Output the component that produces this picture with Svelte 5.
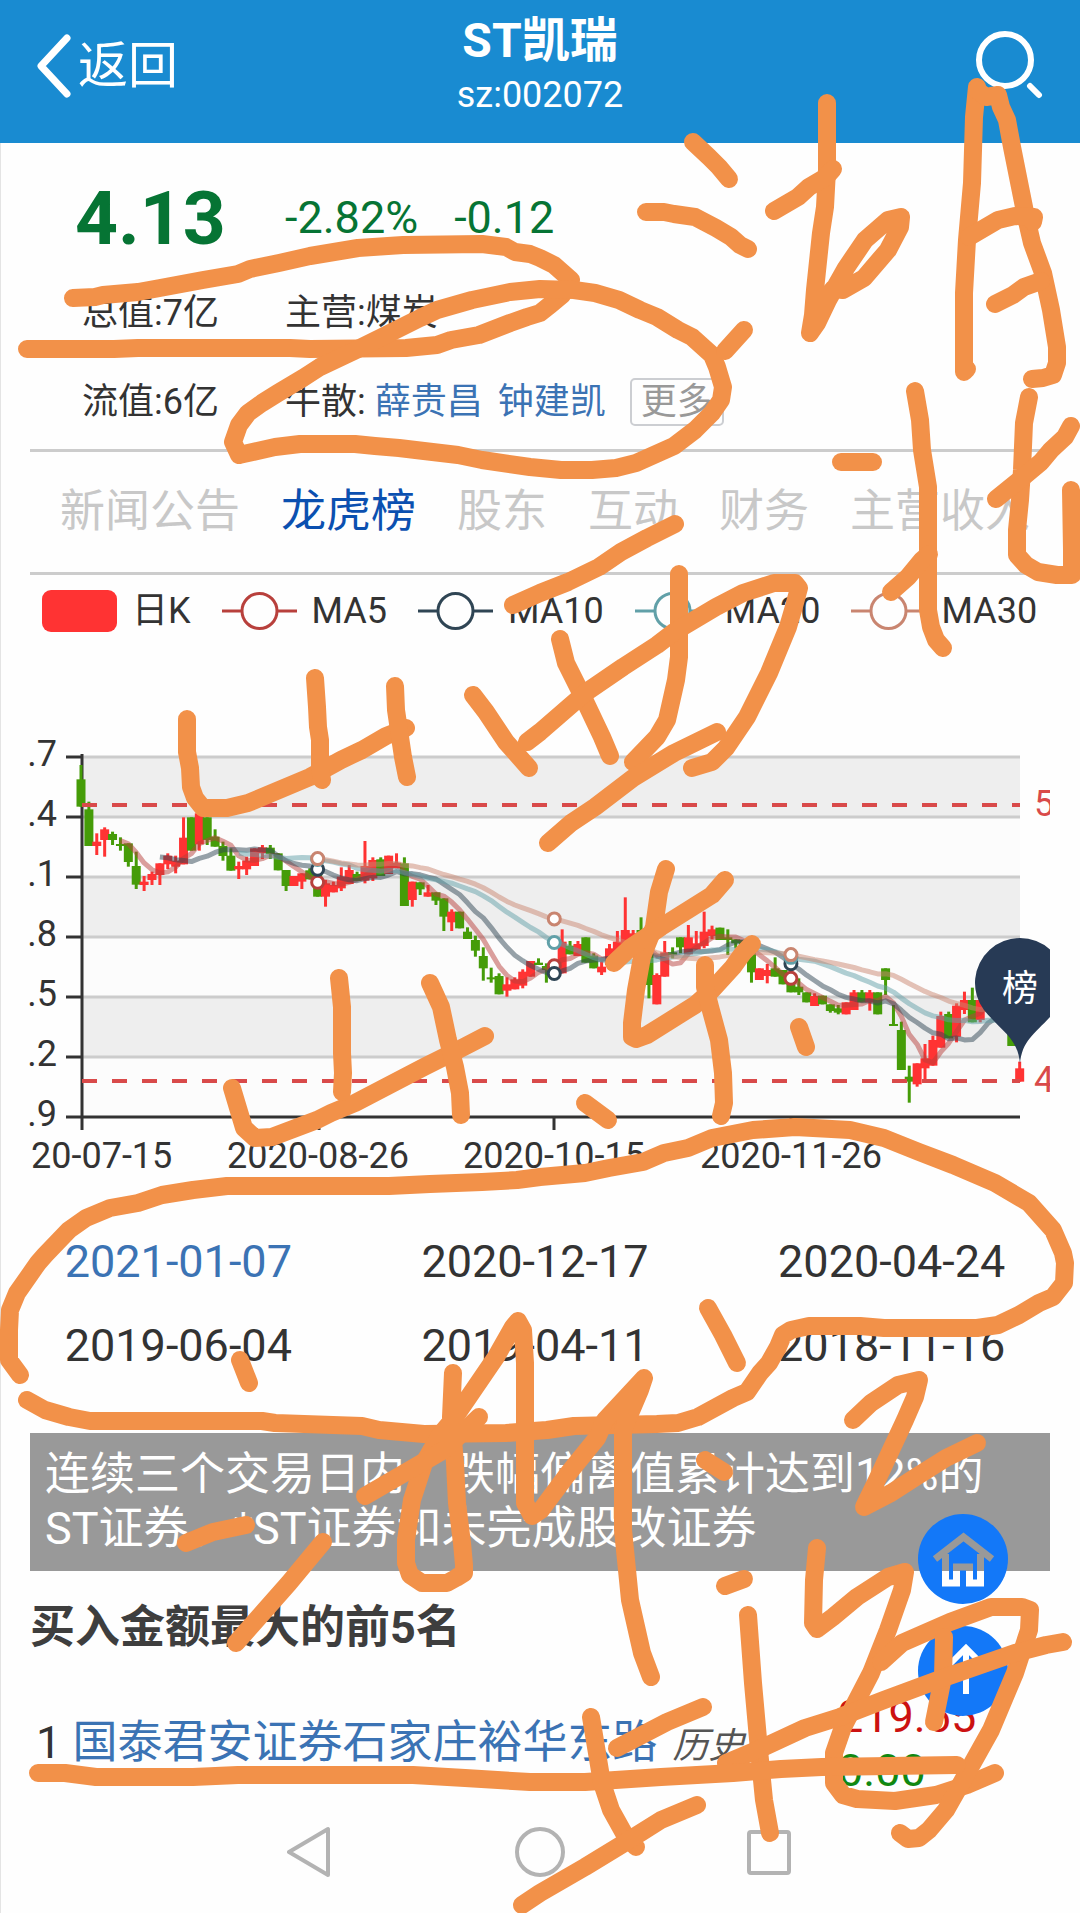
<script>
  const tabs = ['新闻公告', '龙虎榜', '股东', '互动', '财务', '主营收入'];
  let activeTab = $state('龙虎榜');

  const dates = [
    '2021-01-07', '2020-12-17', '2020-04-24',
    '2019-06-04', '2019-04-11', '2018-11-16'
  ];
  let activeDate = $state('2021-01-07');

  const buyers = [
    { rank: 1, name: '国泰君安证券石家庄裕华东路', buy: '219.65', sell: '0.00' }
  ];

  const SERIES = [
    { label: 'MA5', days: 5, color: '#b8403c' },
    { label: 'MA10', days: 10, color: '#2f4554' },
    { label: 'MA20', days: 20, color: '#61a0a8' },
    { label: 'MA30', days: 30, color: '#c98570' }
  ];

  const UP = '#ff3333';
  const DOWN = '#459c08';

  // [high, body top, body bottom, low, 1 = up], three units per pixel, counted downwards
  const CANDLES = [
    [75, 118, 200, 200, 0], [185, 208, 318, 318, 0], [280, 305, 318, 345, 1], [262, 268, 300, 350, 1],
    [275, 282, 300, 315, 0], [292, 312, 318, 332, 0], [310, 310, 366, 380, 0], [335, 378, 434, 447, 0],
    [408, 425, 435, 453, 1], [395, 402, 420, 435, 1], [370, 370, 405, 435, 1], [340, 347, 373, 387, 1],
    [347, 362, 380, 400, 1], [232, 293, 373, 373, 1], [232, 232, 332, 332, 0], [215, 220, 313, 332, 1],
    [232, 232, 300, 315, 0], [268, 290, 320, 320, 0], [305, 318, 348, 362, 0], [325, 347, 392, 392, 0],
    [365, 378, 388, 417, 1], [350, 362, 388, 405, 1], [325, 325, 378, 378, 1], [315, 322, 340, 357, 1],
    [315, 323, 342, 357, 0], [340, 340, 391, 391, 0], [390, 390, 438, 453, 0], [408, 408, 438, 438, 1],
    [400, 400, 425, 447, 1], [385, 391, 418, 418, 0], [395, 395, 470, 470, 0], [420, 430, 470, 500, 1],
    [425, 435, 457, 457, 1], [382, 410, 445, 453, 1], [375, 390, 432, 432, 1], [395, 402, 423, 423, 0],
    [303, 378, 422, 430, 1], [352, 360, 415, 423, 1], [352, 358, 408, 408, 0], [347, 347, 402, 402, 1],
    [340, 368, 385, 385, 1], [352, 370, 498, 498, 0], [425, 425, 480, 500, 1], [427, 427, 448, 465, 0],
    [435, 457, 470, 470, 1], [457, 457, 482, 495, 0], [475, 475, 530, 573, 0], [508, 515, 547, 573, 1],
    [515, 515, 565, 565, 0], [562, 575, 597, 597, 0], [587, 600, 632, 650, 0], [622, 648, 685, 722, 0],
    [683, 712, 718, 728, 0], [700, 708, 763, 763, 0], [712, 733, 752, 770, 1], [712, 718, 748, 748, 1],
    [688, 695, 737, 745, 1], [663, 663, 710, 710, 1], [655, 668, 675, 675, 0], [670, 678, 690, 728, 0],
    [660, 664, 690, 690, 1], [568, 605, 700, 700, 1], [603, 617, 643, 643, 0], [603, 612, 648, 648, 1],
    [592, 592, 668, 668, 0], [640, 647, 685, 685, 0], [665, 680, 697, 705, 1], [612, 625, 675, 690, 1],
    [573, 605, 640, 640, 1], [472, 570, 640, 640, 1], [570, 580, 620, 620, 1], [532, 570, 640, 640, 0],
    [590, 640, 735, 775, 0], [700, 705, 793, 793, 1], [603, 637, 710, 710, 1], [622, 637, 645, 655, 0],
    [592, 592, 622, 640, 0], [555, 592, 643, 643, 1], [573, 610, 628, 628, 1], [515, 575, 618, 625, 1],
    [557, 568, 588, 598, 1], [563, 563, 600, 600, 0], [568, 592, 600, 645, 0], [598, 598, 610, 625, 0],
    [600, 600, 630, 630, 0], [640, 640, 697, 728, 0], [685, 685, 720, 720, 1], [672, 690, 708, 730, 1],
    [652, 685, 710, 710, 0], [690, 690, 733, 733, 0], [705, 705, 757, 757, 0], [715, 740, 757, 765, 0],
    [757, 757, 787, 787, 0], [760, 768, 798, 798, 1], [767, 767, 793, 793, 0], [793, 793, 813, 818, 0],
    [795, 805, 818, 823, 0], [787, 787, 823, 823, 1], [750, 757, 810, 810, 1], [750, 757, 787, 787, 0],
    [750, 757, 787, 812, 1], [757, 757, 823, 823, 0], [685, 685, 720, 765, 0], [795, 852, 858, 858, 0],
    [845, 870, 990, 990, 0], [977, 1010, 1025, 1088, 0], [970, 970, 1033, 1040, 1], [912, 955, 985, 1025, 1],
    [887, 900, 977, 977, 1], [815, 828, 923, 923, 1], [815, 822, 895, 895, 0], [790, 797, 890, 907, 1],
    [755, 780, 810, 822, 1], [743, 780, 847, 847, 0], [770, 780, 840, 847, 1], [740, 745, 815, 815, 1],
    [760, 770, 810, 810, 0], [780, 790, 830, 830, 0], [840, 850, 918, 918, 0], [965, 985, 1025, 1025, 1]
  ];

  const Y_TICKS = ['.7', '.4', '.1', '.8', '.5', '.2', '.9'];
  const BANDS = [757, 877, 997];

  const cx = (i) => 81 + i * 7.888;
  const cy = (v) => 740 + v / 3;

  const closes = CANDLES.map((c) => (c[4] ? c[1] : c[2]));

  function average(i, days) {
    let sum = 0;
    for (let j = 0; j < days; j++) sum += closes[i - j];
    return sum / days;
  }

  const averages = SERIES.map((s) => {
    const points = [];
    for (let i = s.days; i < closes.length; i++) {
      points.push(`${cx(i).toFixed(1)},${cy(average(i, s.days)).toFixed(1)}`);
    }
    const marks = [30, 60, 90].map((i) => ({ x: cx(i), y: cy(average(i, s.days)) }));
    return { ...s, points: points.join(' '), marks };
  });

  // Freehand marker strokes lying over the page
  const STROKES = [
    '73,298 95,297 103,295 138,292 160,288 203,280 238,274 250,269 279,263 310,256 358,248 403,245 482,244 506,247 515,252 530,254 540,258 554,265 571,280 562,295 550,305 540,313 527,317 510,323 479,335 451,340 437,345 406,348 310,349 290,348 138,348 114,349 27,349',
    '239,455 233,442 239,425 248,413 262,403 278,393 303,378 320,367 358,349 382,337 420,318 437,310 472,300 510,292 540,289 574,290 595,293 619,300 640,310 657,317 678,330 692,337 712,355 717,367 723,387 721,400 712,413 695,430 674,446 636,463 616,468 592,470 561,470 530,467 482,460 458,455 424,451 399,448 375,446 355,444 300,444 275,447 239,455',
    '744,330 725,351',
    '693,142 709,157 719,167 729,179',
    '646,212 664,212 674,214 695,217 716,228 731,237 740,245 748,249',
    '827,103 827,170 825,207 821,233 815,290 813,315 810,333 817,323 828,300 846,268 865,240 888,220 901,217 900,227 888,250 864,278 843,290 833,289',
    '774,211 798,197 809,187 826,177 833,169',
    '977,87 974,117 972,183 967,240 964,293 964,372 967,369',
    '977,90 986,97 998,95 1001,107 1007,120 1012,147 1020,187 1026,217 1032,243 1043,273 1051,310 1057,347 1057,363 1053,375 1043,378 1032,379',
    '969,237 998,220 1015,216 1034,217 1033,222',
    '995,304 1013,295 1024,287 1041,281',
    '841,462 873,462',
    '915,391 920,420 922,450 928,487 928,610 931,627 936,640 943,648',
    '891,592 908,577 922,560 929,554',
    '1029,397 1024,423 1022,470 1020,500 1017,530 1017,555 1026,565 1038,572 1057,575 1072,575 1072,550 1071,490',
    '996,499 1022,478 1041,462 1051,450 1065,437 1071,426',
    '187,719 187,752 190,768 191,787 195,798 203,808 227,808 248,803 310,777 341,760 362,750 386,736 406,728',
    '315,678 317,707 318,727 320,740 320,768 322,780',
    '395,686 396,710 400,737 403,757 407,777',
    '473,695 486,712 506,742 529,768',
    '513,605 540,593 568,582 599,567 621,552 647,538 675,524',
    '560,639 566,663 583,697 602,737 610,756',
    '679,574 679,657 676,680 667,720 657,737 633,762',
    '527,742 540,732 585,693 623,667 657,645 674,632 716,607 743,593 774,583 795,583 799,588 793,610 788,627 769,673 747,717 726,748 712,762 692,768',
    '548,843 571,823 595,807 633,778 674,753 717,732',
    '232,1088 238,1108 244,1128 255,1138 272,1137 317,1120 331,1113 355,1103 424,1067 458,1050 485,1036',
    '339,978 342,1007 342,1053 343,1073 342,1092',
    '430,983 441,1007 448,1040 455,1067 460,1093 461,1115',
    '666,869 659,892 654,927 642,957 636,990 632,1023 632,1037 636,1039 647,1035 695,1005 712,990 733,967 743,953 752,944',
    '614,963 630,948 661,927 712,895 725,880',
    '705,965 705,987 710,1007 719,1040 723,1073 724,1103 721,1116',
    '799,1027 806,1047',
    '585,1103 608,1120',
    '20,1375 9,1360 9,1330 10,1310 17,1293 38,1263 45,1255 69,1230 86,1218 110,1208 138,1203 162,1195 193,1190 227,1186 389,1186 430,1184 482,1182 517,1180 540,1177 585,1173 609,1168 643,1162 664,1153 688,1148 712,1138 753,1130 795,1127 850,1130 884,1138 919,1152 953,1165 995,1183 1029,1203 1053,1230 1063,1253 1065,1263 1064,1283 1053,1297 1039,1303 1019,1315 998,1325 977,1328 884,1328 860,1326 809,1326 791,1330 783,1335 778,1347 769,1363 760,1373 747,1392 733,1398 698,1417 678,1423 657,1424 574,1426 547,1430 506,1433 424,1434 379,1430 362,1426 275,1423 262,1421 90,1421 69,1417 45,1410 27,1400',
    '240,1360 249,1383',
    '453,1373 451,1417 453,1440 455,1463 457,1503 462,1543 464,1565 464,1573 456,1578 447,1583 422,1583 410,1575 406,1563 406,1540 412,1500 424,1463 440,1435 455,1417 496,1357 513,1327 518,1321 523,1330 525,1363 525,1463 525,1503 532,1516 541,1510 567,1475 597,1438 605,1420 644,1378 640,1390 623,1430 623,1530 630,1600 642,1653 651,1677',
    '365,1496 444,1450 479,1417',
    '186,1543 213,1532 246,1525',
    '323,1542 289,1583 236,1643',
    '708,1308 723,1335 737,1363',
    '705,1460 724,1472',
    '853,1420 871,1403 898,1385 919,1380 915,1397 905,1420 877,1480 864,1507 891,1493 919,1475 946,1458 977,1443',
    '725,1586 744,1579',
    '748,1615 753,1683 759,1750 764,1800 770,1833',
    '817,1548 814,1580 813,1623 817,1629 833,1617 857,1597 888,1577 905,1572 902,1590 888,1630 871,1673 843,1727 834,1753 834,1783 843,1795 857,1799 895,1801 936,1795 967,1785 995,1773',
    '881,1662 902,1643 950,1622 991,1607 1022,1607 1030,1610 1029,1630 1015,1673 991,1730 967,1773 946,1810 929,1830 919,1838 908,1839 900,1833',
    '944,1637 943,1677 934,1722',
    '726,1763 764,1747 805,1728 840,1717 884,1700 946,1677 1015,1653 1046,1645 1063,1642',
    '38,1773 65,1773 96,1777 193,1777 238,1775 413,1775 465,1778 530,1782 585,1782 661,1777 733,1773 781,1769 822,1767 957,1765',
    '591,1717 597,1753 602,1783 611,1810 626,1837 636,1847',
    '617,1748 667,1722 703,1707',
    '522,1905 540,1893 585,1867 626,1842 661,1820 697,1805'
  ];
</script>

<div class="page">
  <header class="topbar">
    <button class="back">
      <svg width="36" height="66" viewBox="0 0 36 66" aria-hidden="true">
        <path d="M31 5 5 33 31 61" fill="none" stroke="currentColor" stroke-width="7" stroke-linecap="round" stroke-linejoin="round" />
      </svg>
      返回
    </button>
    <div class="title">
      <h1>ST凯瑞</h1>
      <p>sz:002072</p>
    </div>
    <button class="search" aria-label="搜索">
      <svg width="70" height="70" viewBox="0 0 70 70" aria-hidden="true">
        <circle cx="31" cy="31" r="26" fill="none" stroke="currentColor" stroke-width="6" />
        <path d="M56 57 65 66" stroke="currentColor" stroke-width="6" stroke-linecap="round" />
      </svg>
    </button>
  </header>

  <main>
    <section class="quote">
      <strong class="price">4.13</strong>
      <div class="change"><span>-2.82%</span><span>-0.12</span></div>
      <span class="cap">总值:7亿</span>
      <span>主营:煤炭</span>
      <span class="cap">流值:6亿</span>
      <div class="traders">
        <span>牛散:</span>
        <a href="#xue">薛贵昌</a>
        <a href="#zhong">钟建凯</a>
        <button class="more">更多</button>
      </div>
    </section>

    <nav class="tabs">
      {#each tabs as tab}
        <button class:active={tab === activeTab} onclick={() => (activeTab = tab)}>{tab}</button>
      {/each}
    </nav>

    <div class="legend">
      <span class="item"><i class="chip"></i>日K</span>
      {#each SERIES as s}
        <span class="item">
          <svg width="75" height="40" viewBox="0 0 75 40" fill="none" stroke={s.color} stroke-width="3" aria-hidden="true">
            <path d="M0 20H20M55 20H75" />
            <circle cx="37.5" cy="20" r="17.5" />
          </svg>
          {s.label}
        </span>
      {/each}
    </div>

    <svg class="chart" viewBox="27 647 1023 572" role="img" aria-label="日K线">
      {#each BANDS as y}
        <rect x="82" {y} width="938" height="60" fill="#eeeeee" />
        <rect x="82" y={y + 60} width="938" height="60" fill="#fcfcfc" />
      {/each}
      {#each Y_TICKS as tick, i}
        <path d="M82 {757 + i * 60}H1020" stroke={i === 6 ? '#333' : '#ccc'} stroke-width="3" />
        <path d="M66 {757 + i * 60}H82" stroke="#333" stroke-width="3" />
        <text x="57" y={766 + i * 60} text-anchor="end">{tick}</text>
      {/each}
      <path d="M82 754V1130M319 1117V1130M554 1117V1130M791 1117V1130" stroke="#333" stroke-width="3" />

      {#each CANDLES as [high, top, bottom, low, up], i}
        <g fill={up ? UP : DOWN}>
          <rect x={cx(i) - 1.5} y={cy(high)} width="3" height={(low - high) / 3} />
          <rect x={cx(i) - 4.5} y={cy(top)} width="9" height={(bottom - top) / 3} />
        </g>
      {/each}

      {#each averages as line}
        <polyline points={line.points} fill="none" stroke={line.color} stroke-width="5" stroke-linejoin="round" opacity="0.5" />
      {/each}
      {#each averages as line}
        {#each line.marks as mark}
          <circle cx={mark.x} cy={mark.y} r="6" fill="#fff" stroke={line.color} stroke-width="3" />
        {/each}
      {/each}

      <path d="M82 805H1020M82 1081H1020" stroke="#d94a4a" stroke-width="4" stroke-dasharray="15 15" />
      <text class="level" x="1034" y="816">5</text>
      <text class="level" x="1034" y="1092">4</text>

      <path d="M1020 1064C1018 1038 1002 1032 984 1010A45 45 0 1 1 1056 1010C1038 1032 1022 1038 1020 1064Z" fill="#273a55" />
      <text class="pin" x="1020" y="1001" text-anchor="middle">榜</text>

      <text x="31" y="1168">20-07-15</text>
      <text x="318" y="1168" text-anchor="middle">2020-08-26</text>
      <text x="554" y="1168" text-anchor="middle">2020-10-15</text>
      <text x="791" y="1168" text-anchor="middle">2020-11-26</text>
    </svg>

    <div class="dates">
      {#each dates as date}
        <button class:active={date === activeDate} onclick={() => (activeDate = date)}>{date}</button>
      {/each}
    </div>

    <p class="notice">连续三个交易日内，跌幅偏离值累计达到12%的ST证券、*ST证券和未完成股改证券</p>

    <h2>买入金额最大的前5名</h2>
    <table class="buyers">
      <tbody>
        {#each buyers as b}
          <tr>
            <td>{b.rank} <a href="#seat">{b.name}</a><em>历史</em></td>
            <td class="amounts">
              <div class="buy">{b.buy}</div>
              <div class="sell">{b.sell}</div>
            </td>
          </tr>
        {/each}
      </tbody>
    </table>
  </main>

  <footer class="sysnav">
    <button aria-label="后退">
      <svg width="50" height="54" viewBox="0 0 50 54" aria-hidden="true">
        <path d="M2 27 41 4V50Z" stroke-linejoin="round" />
      </svg>
    </button>
    <button aria-label="主屏幕">
      <svg width="50" height="54" viewBox="0 0 50 54" aria-hidden="true"><circle cx="25" cy="27" r="23" /></svg>
    </button>
    <button aria-label="最近任务">
      <svg width="50" height="54" viewBox="0 0 50 54" aria-hidden="true"><rect x="6" y="7" width="40" height="41" rx="2" /></svg>
    </button>
  </footer>

  <div class="floating">
    <button aria-label="首页">
      <svg width="90" height="90" viewBox="0 0 90 90" aria-hidden="true">
        <mask id="home-cut">
          <rect width="90" height="90" fill="#fff" />
          <g fill="none" stroke="#000" stroke-width="7">
            <path d="M17 45 45.500 23 74 45" />
            <path d="M27.500 40V69H38.500V53H51.500V69H62.500V40" />
          </g>
        </mask>
        <circle cx="45" cy="45" r="45" fill="#1378f8" mask="url(#home-cut)" />
      </svg>
    </button>
    <button aria-label="回到顶部">
      <svg width="90" height="90" viewBox="0 0 90 90" aria-hidden="true">
        <circle cx="45" cy="45" r="45" fill="#1378f8" />
        <path d="M48 68V24M32 38 48 22 64 38" fill="none" stroke="#fff" stroke-width="6" />
      </svg>
    </button>
  </div>

  <svg class="marker" viewBox="0 0 1080 1913" aria-hidden="true">
    {#each STROKES as points}
      <polyline {points} />
    {/each}
  </svg>
</div>

<style>
  :global(body) {
    margin: 0;
    background: #fefefe;
  }

  .page {
    position: relative;
    overflow: hidden;
    font-family: Roboto, 'Noto Sans CJK SC', sans-serif;
    font-size: 36px;
    color: #333;
    box-shadow: inset 1px 0 #e4e4e4;
  }

  button {
    border: 0;
    padding: 0;
    background: none;
    font: inherit;
    color: inherit;
    cursor: pointer;
  }

  svg {
    display: block;
  }

  a {
    color: #3b73b4;
    text-decoration: none;
  }

  .topbar {
    display: grid;
    grid-template-columns: 1fr auto 1fr;
    align-items: start;
    height: 143px;
    padding: 0 36px;
    background: #198bd1;
    color: #fff;
  }

  .back {
    display: flex;
    align-items: center;
    gap: 6px;
    height: 66px;
    margin-top: 33px;
    font-size: 50px;
    line-height: 66px;
  }

  .title {
    text-align: center;
  }

  .title h1 {
    margin: 13px 0 0;
    font-size: 48px;
    line-height: 56px;
  }

  .title p {
    margin: 4px 0 0;
    line-height: 44px;
  }

  .search {
    justify-self: end;
    margin-top: 29px;
  }

  main {
    padding: 0 30px;
  }

  .quote {
    display: grid;
    grid-template-columns: 210px 1fr;
    grid-template-rows: 100px 89px 89px;
    align-items: center;
    padding: 25px 0 3px 45px;
    border-bottom: 3px solid #ccc;
    line-height: 46px;
  }

  .price {
    font-size: 75px;
    color: #067434;
  }

  .change {
    display: flex;
    gap: 36px;
    font-size: 45px;
    color: #067434;
  }

  .cap {
    padding-left: 7px;
  }

  .traders {
    display: flex;
    align-items: center;
  }

  .traders a {
    margin-right: 15px;
  }

  .traders span {
    margin-right: 9px;
  }

  .more {
    margin-left: 9px;
    padding: 0 9px;
    border: 2px solid #ccced2;
    border-radius: 5px;
    line-height: 44px;
    color: #999;
  }

  .tabs {
    display: flex;
    gap: 41px;
    padding-left: 30px;
    height: 120px;
    border-bottom: 3px solid #ccc;
    font-size: 45px;
    line-height: 54px;
    color: #c8c8c8;
    white-space: nowrap;
  }

  .tabs .active {
    color: #0b50b0;
  }

  .legend {
    display: flex;
    gap: 31px;
    align-items: center;
    height: 72px;
    padding-left: 12px;
    line-height: 42px;
  }

  .item {
    display: flex;
    align-items: center;
    gap: 15px;
  }

  .chip {
    width: 75px;
    height: 42px;
    border-radius: 9px;
    background: #ff3333;
  }

  .chart {
    width: calc(100% + 3px);
    height: auto;
    margin-left: -3px;
    font-size: 36px;
    fill: #333;
  }

  .level {
    fill: #d94a4a;
  }

  .pin {
    fill: #fff;
  }

  .dates {
    display: grid;
    grid-template-columns: repeat(3, 1fr);
    grid-auto-rows: 84px;
    margin: 0 -20px 0 -30px;
    font-size: 45px;
  }

  .dates .active {
    color: #3b73b4;
  }

  .notice {
    margin: 46px 0 0;
    padding: 15px;
    background: #999;
    color: #fff;
    font-size: 45px;
    line-height: 54px;
  }

  h2 {
    margin: 3px 0 0;
    font-size: 45px;
    line-height: 108px;
    color: #3e3e3e;
  }

  .buyers {
    width: 100%;
    margin-top: 8px;
    border-collapse: collapse;
    font-size: 45px;
    line-height: 54px;
    white-space: nowrap;
  }

  .buyers td {
    padding: 0 0 0 6px;
  }

  .buyers em {
    margin-left: 15px;
    font-size: 36px;
    color: #555;
  }

  .buyers .amounts {
    width: 212px;
    padding: 0;
  }

  .buy {
    color: #cc1111;
  }

  .sell {
    color: #118811;
  }

  .sysnav {
    display: flex;
    justify-content: center;
    gap: 178px;
    align-items: center;
    height: 108px;
    padding-bottom: 7px;
  }

  .sysnav svg {
    fill: none;
    stroke: #b3b3b3;
    stroke-width: 4px;
  }

  .floating {
    position: absolute;
    right: 72px;
    bottom: 197px;
    display: flex;
    flex-direction: column;
    gap: 22px;
  }

  .marker {
    position: absolute;
    top: 0;
    left: 0;
    width: 100%;
    pointer-events: none;
    fill: none;
    stroke: #f29149;
    stroke-width: 18px;
    stroke-linecap: round;
    stroke-linejoin: round;
  }
</style>
